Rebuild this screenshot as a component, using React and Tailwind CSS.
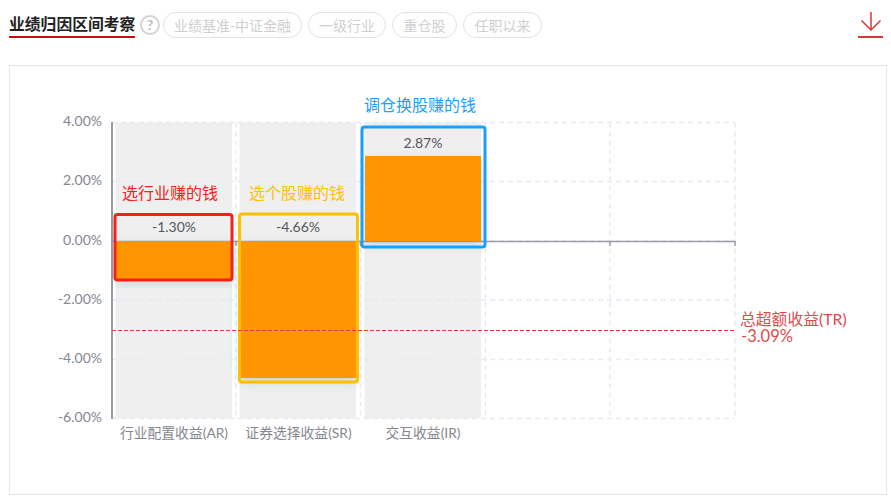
const FONT = 'font-["Lato","Noto_Sans_CJK_SC",sans-serif]';

const tags = [
  { label: '业绩基准-中证金融', width: 'w-[139px]' },
  { label: '一级行业', width: 'w-[78px]' },
  { label: '重仓股', width: 'w-[65px]' },
  { label: '任职以来', width: 'w-[79px]' },
];

const yTicks = [
  { y: 122.5, label: '4.00%' },
  { y: 181.5, label: '2.00%' },
  { y: 241, label: '0.00%' },
  { y: 300, label: '-2.00%' },
  { y: 359.5, label: '-4.00%' },
  { y: 418.5, label: '-6.00%' },
];
const xGrid = [236, 360.5, 485.5, 610, 735];

const bars = [
  { x: 116, top: 241, h: 39, value: '-1.30%', valueY: 232, name: '行业配置收益(AR)', nameX: 174 },
  { x: 240, top: 241, h: 137, value: '-4.66%', valueY: 232, name: '证券选择收益(SR)', nameX: 298.5 },
  { x: 365, top: 156, h: 85, value: '2.87%', valueY: 148, name: '交互收益(IR)', nameX: 423 },
];

const boxes = [
  { x: 115, y: 214.5, w: 117, h: 65.5, color: '#f5201a', label: '选行业赚的钱', lx: 122, ly: 199 },
  { x: 239.5, y: 214, w: 118, h: 168, color: '#ffc000', label: '选个股赚的钱', lx: 249, ly: 199 },
  { x: 362, y: 127, w: 123, h: 120, color: '#1a9fff', label: '调仓换股赚的钱', lx: 364, ly: 111 },
];

const DownloadIcon = () => (
  <svg width="27" height="28" viewBox="0 0 27 28" fill="none" stroke="#d9363e">
    <path d="M13 1v18M3.5 9.500 13 19l9.500-9.500" strokeWidth="1.500" />
    <path d="M0 26h25" strokeWidth="2" />
  </svg>
);

const Chart = () => (
  <svg className="block w-full h-full" viewBox="10 66 876 428" fontFamily="Lato, 'Noto Sans CJK SC', sans-serif">
    <defs>
      <filter id="barShadow" x="-20%" y="-20%" width="140%" height="140%">
        <feDropShadow dx="0" dy="4" stdDeviation="5" floodColor="#3a7a8a" floodOpacity="0.22" />
      </filter>
    </defs>

    {bars.map((b) => (
      <rect key={b.name} x={b.x - 0.5} y="122.500" width="116.500" height="296" fill="#efefef" />
    ))}

    {yTicks.map((t) => (
      <line key={t.label} x1="112" x2="735" y1={t.y} y2={t.y} stroke="#e8eaf3" strokeWidth="1.300" strokeDasharray="5 4" />
    ))}
    {xGrid.map((x) => (
      <line key={x} x1={x} x2={x} y1="122.500" y2="418.500" stroke="#e8eaf3" strokeWidth="1.500" strokeDasharray="5 4" />
    ))}

    <line x1="112" x2="112" y1="122" y2="419" stroke="#9a9ca3" strokeWidth="2" />
    <line x1="111" x2="735" y1="241.500" y2="241.500" stroke="#9a9ca3" strokeWidth="1.500" />
    {[236, 360.5, 610, 735].map((x) => (
      <line key={x} x1={x} x2={x} y1="241" y2="246" stroke="#9a9ca3" strokeWidth="1.500" />
    ))}

    {yTicks.map((t) => (
      <text key={t.label} x="102" y={t.y + 3.500} textAnchor="end" fontSize="14" fill="#85878e">{t.label}</text>
    ))}

    {bars.map((b) => (
      <g key={b.value}>
        <rect x={b.x} y={b.top} width="116" height={b.h} fill="#ff9500" filter="url(#barShadow)" />
        <text x={b.x + 58} y={b.valueY} textAnchor="middle" fontSize="14" fill="#55575c">{b.value}</text>
        <text x={b.nameX} y="438" textAnchor="middle" fontSize="13.800" fill="#85878e">{b.name}</text>
      </g>
    ))}

    {boxes.map((b) => (
      <g key={b.label}>
        <rect x={b.x} y={b.y} width={b.w} height={b.h} rx="2.500" fill="none" stroke={b.color} strokeWidth="3" />
        <text x={b.lx} y={b.ly} fontSize="16" fill={b.color}>{b.label}</text>
      </g>
    ))}

    <line x1="112" x2="735" y1="330.500" y2="330.500" stroke="#e03a3a" strokeWidth="1" strokeDasharray="4 2" />
    <text x="740" y="325" fontSize="15.800" fill="#dd4b4b">总超额收益(TR)</text>
    <text x="741" y="342" fontSize="16.500" fill="#dd4b4b">-3.09%</text>
  </svg>
);

export default function App() {
  return (
    <div className={`w-[891px] h-[501px] bg-white overflow-hidden ${FONT}`}>
      <div className="h-[65px] flex items-start pl-[9px] pr-[8px]">
        <div className="mt-[12px] w-[126px] h-[26px] border-b-2 border-[#c40d14] text-[15.800px] leading-[24px] font-bold text-[#222] whitespace-nowrap">
          业绩归因区间考察
        </div>
        <div className="ml-[5px] mt-[15px] w-[20px] h-[20px] rounded-full border-2 border-[#d4d4d4] flex items-center justify-center text-[14px] leading-none font-bold text-[#bdbdbd]">
          ?
        </div>
        <div className="ml-[3px] mt-[12px] flex gap-[6px]">
          {tags.map((tag) => (
            <div
              key={tag.label}
              className={`${tag.width} h-[26px] rounded-full border border-[#e2e2e2] flex items-center justify-center text-[14px] text-[#cfcfcf] whitespace-nowrap`}
            >
              {tag.label}
            </div>
          ))}
        </div>
        <div className="ml-auto mt-[11px] mr-[-2px]">
          <DownloadIcon />
        </div>
      </div>
      <div className="ml-[9px] w-[878px] h-[430px] border border-[#e4e4e4]">
        <Chart />
      </div>
    </div>
  );
}
